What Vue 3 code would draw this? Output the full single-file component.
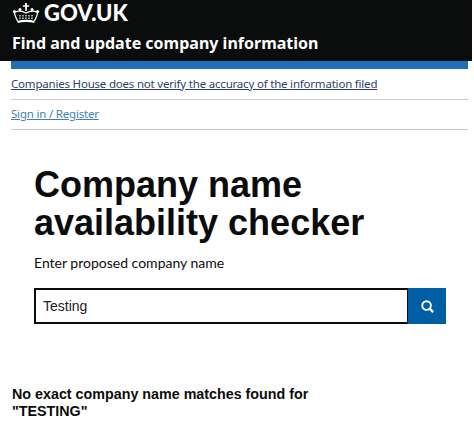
<template>
  <div class="page">
    <header class="masthead">
      <div class="brand">
        <svg class="crown" viewBox="0 0 28 22" width="28" height="22" aria-hidden="true">
          <g fill="none" stroke="#fff">
            <path d="M5.500 19 C3.500 15 2.500 13 2.500 10.500 C6 8.500 10 9 14 11 C18 9 22 8.500 25.500 10.500 C25.500 13 24.500 15 22.500 19" stroke-width="1.300" />
            <path d="M8 17 V12 M11 17 V12 M14 17 V12 M17 17 V12 M20 17 V12" stroke-width="1.200" stroke-dasharray="1.500 1" />
            <path d="M5.500 20 C10 18.600 18 18.600 22.500 20" stroke-width="2.200" />
          </g>
          <g fill="#fff">
            <path d="M13.100 1 h1.800 v2.200 h2.200 v1.600 h-2.200 v4 h-1.800 v-4 h-2.200 v-1.600 h2.200 z" />
            <circle cx="2.300" cy="9.500" r="1.500" />
            <circle cx="25.700" cy="9.500" r="1.500" />
            <circle cx="8" cy="7.500" r="1.500" />
            <circle cx="20" cy="7.500" r="1.500" />
          </g>
        </svg>
        <span class="wordmark">GOV.UK</span>
      </div>
      <div class="service">Find and update company information</div>
    </header>
    <div class="rule-blue"></div>
    <nav class="rows">
      <div class="row row-first"><a class="dark-link" href="#">Companies House does not verify the accuracy of the information filed</a></div>
      <div class="row"><a class="link" href="#">Sign in / Register</a></div>
    </nav>
    <main class="checker">
      <h1>Company name availability checker</h1>
      <label class="label" for="q">Enter proposed company name</label>
      <div class="search">
        <input id="q" class="input" value="Testing" />
        <button class="go" aria-label="Search">
          <svg viewBox="0 0 16 16" width="15" height="15" aria-hidden="true">
            <circle cx="7" cy="7" r="4.600" fill="none" stroke="#fff" stroke-width="2" />
            <path d="M10.300 10.300 L14 14" stroke="#fff" stroke-width="2.400" />
          </svg>
        </button>
      </div>
    </main>
    <p class="result">No exact company name matches found for<br />"TESTING"</p>
  </div>
</template>

<script setup>
</script>

<style>
html, body { background: #fff; }
</style>

<style scoped>
.page {
  width: 474px;
  height: 431px;
  overflow: hidden;
  background: #fff;
  font-family: "Noto Sans", "Liberation Sans", sans-serif;
}
.masthead {
  width: 472px;
  height: 61px;
  background: #0b0c0c;
  color: #fff;
  padding: 0 0 0 12px;
  box-sizing: border-box;
}
.brand {
  display: flex;
  align-items: center;
  gap: 4px;
  height: 26px;
}
.wordmark {
  font-family: "Lato", sans-serif;
  font-weight: 900;
  font-size: 22px;
  line-height: 26px;
}
.service {
  margin-top: 5px;
  font-family: "Noto Sans", sans-serif;
  font-weight: 700;
  font-size: 16px;
  line-height: 24px;
}
.rule-blue {
  margin: 0 6px 0 11px;
  height: 8px;
  background: #1d70b8;
}
.rows {
  margin: 0 6px 0 11px;
  font-family: "Noto Sans", sans-serif;
  font-size: 11.500px;
  letter-spacing: -0.2px;
}
.row {
  height: 30.500px;
  display: flex;
  align-items: center;
  padding-bottom: 1px;
  border-bottom: 1px solid #c9c9c9;
  box-sizing: border-box;
}
.dark-link { color: #2d3f6b; }
.link { color: #3f7fb0; }
.checker {
  padding: 36px 28px 0 34px;
}
h1 {
  margin: 0 0 12px;
  font-family: "Liberation Sans", Arial, sans-serif;
  font-weight: 700;
  font-size: 36px;
  line-height: 38px;
  color: #0b0c0c;
}
.label {
  display: block;
  font-family: "Lato", sans-serif;
  font-size: 14px;
  line-height: 18px;
  color: #0b0c0c;
  margin-bottom: 16px;
}
.search {
  display: flex;
  height: 36px;
  width: 412px;
}
.input {
  flex: 1;
  min-width: 0;
  box-sizing: border-box;
  border: 2px solid #0b0c0c;
  border-right-width: 1px;
  padding: 0 8px 0 7px;
  font-family: "Liberation Sans", Arial, sans-serif;
  font-size: 14px;
  color: #222;
  outline: none;
  border-radius: 0;
}
.go {
  width: 38px;
  border: 0;
  padding: 0;
  background: #005ea5;
  display: flex;
  align-items: center;
  justify-content: center;
}
.result {
  margin: 0;
  padding: 62px 0 0 12px;
  font-family: "Liberation Sans", Arial, sans-serif;
  font-weight: 700;
  font-size: 14.300px;
  line-height: 17px;
  color: #0b0c0c;
}
</style>
